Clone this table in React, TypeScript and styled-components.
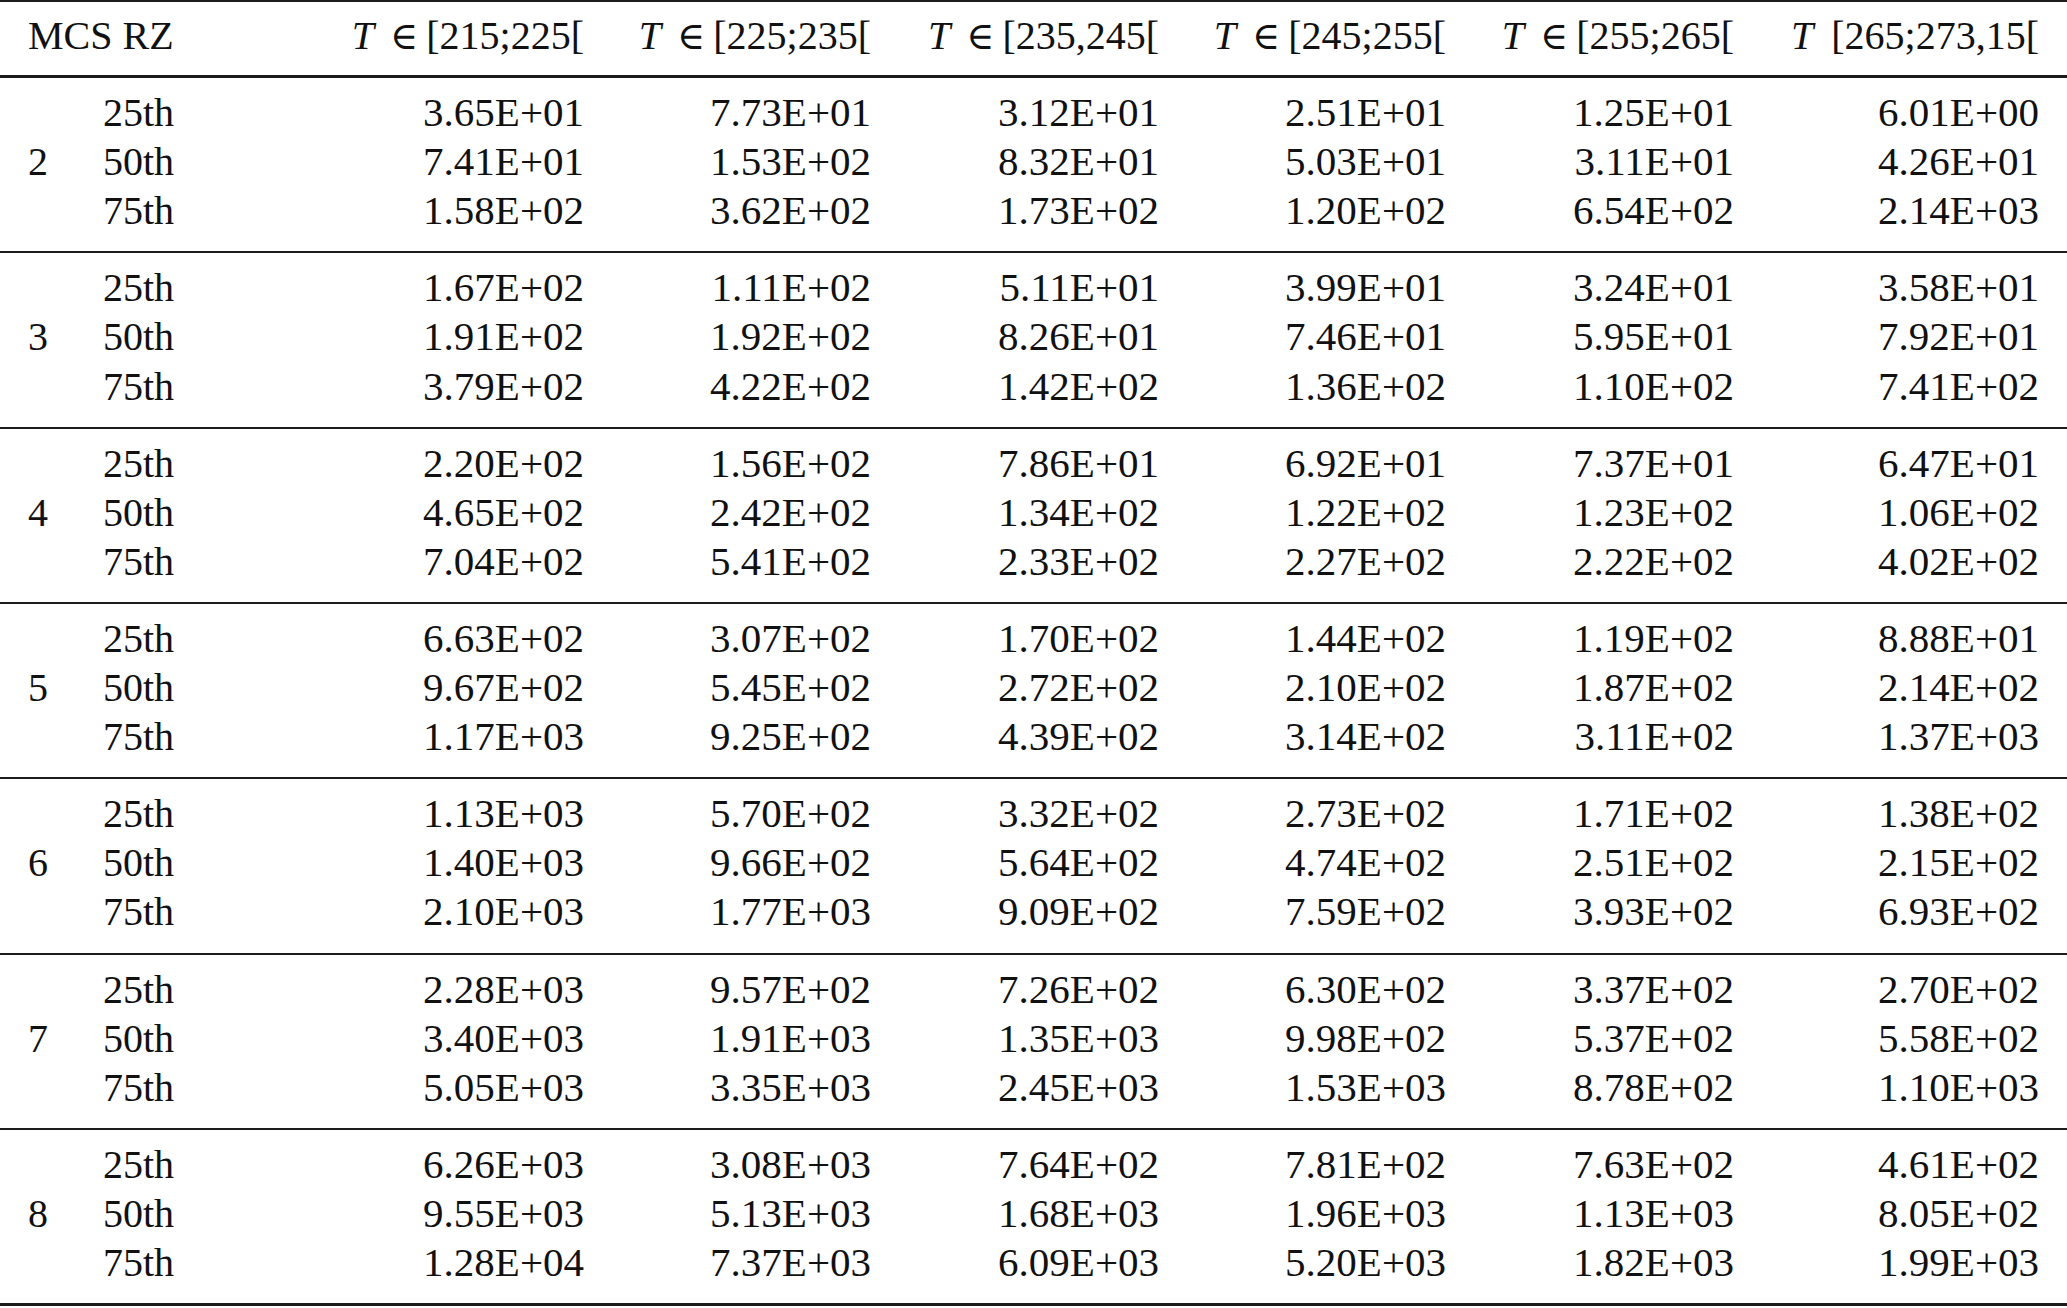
import React from "react";
import styled, { createGlobalStyle } from "styled-components";

const GlobalStyle = createGlobalStyle`
  html, body {
    margin: 0;
    padding: 0;
    background: #ffffff;
  }
  body {
    font-family: "Liberation Serif", "Times New Roman", serif;
    color: #111111;
  }
`;

const RULE = "#1c1c1c";

const Table = styled.table`
  width: 2067px;
  table-layout: fixed;
  border-collapse: separate;
  border-spacing: 0;
  font-family: "Liberation Serif", "Times New Roman", serif;
  font-size: 40px;
  line-height: 49.1px;
  color: #111111;
`;

const HeadCell = styled.th<{ $align: "left" | "right" }>`
  font-weight: normal;
  white-space: nowrap;
  text-align: ${(p) => p.$align};
  padding: 9px ${(p) => (p.$align === "right" ? "28px" : "0")} 15px
    ${(p) => (p.$align === "left" ? "28px" : "0")};
  border-top: 2px solid ${RULE};
  border-bottom: 3px solid ${RULE};
`;

const Var = styled.i`
  font-style: italic;
`;

const Relation = styled.span`
  font-family: "DejaVu Serif", "DejaVu Sans", serif;
  font-size: 38px;
  line-height: 0;
  margin: 0 8px 0 16px;
`;

const Gap = styled.span`
  margin-left: 18px;
`;

const Cell = styled.td<{
  $align: "left" | "right";
  $first: boolean;
  $last: boolean;
  $final: boolean;
}>`
  white-space: nowrap;
  text-align: ${(p) => p.$align};
  font-size: ${(p) => (p.$align === "right" ? "41px" : "40px")};
  padding-top: ${(p) => (p.$first ? "10px" : "0")};
  padding-bottom: ${(p) => (p.$last ? "16px" : "0")};
  padding-left: ${(p) => (p.$align === "left" ? "28px" : "0")};
  padding-right: ${(p) => (p.$align === "right" ? "28px" : "0")};
  border-bottom: ${(p) =>
    p.$last ? `${p.$final ? 3 : 2}px solid ${RULE}` : "none"};
`;

const headers: { range: string; member: boolean }[] = [
  { range: "[215;225[", member: true },
  { range: "[225;235[", member: true },
  { range: "[235,245[", member: true },
  { range: "[245;255[", member: true },
  { range: "[255;265[", member: true },
  { range: "[265;273,15[", member: false },
];

const colWidths = [75, 250, 287, 287, 288, 287, 288, 305];

const labels = ["25th", "50th", "75th"];

const groups: { rz: string; rows: string[][] }[] = [
  {
    rz: "2",
    rows: [
      ["3.65E+01", "7.73E+01", "3.12E+01", "2.51E+01", "1.25E+01", "6.01E+00"],
      ["7.41E+01", "1.53E+02", "8.32E+01", "5.03E+01", "3.11E+01", "4.26E+01"],
      ["1.58E+02", "3.62E+02", "1.73E+02", "1.20E+02", "6.54E+02", "2.14E+03"],
    ],
  },
  {
    rz: "3",
    rows: [
      ["1.67E+02", "1.11E+02", "5.11E+01", "3.99E+01", "3.24E+01", "3.58E+01"],
      ["1.91E+02", "1.92E+02", "8.26E+01", "7.46E+01", "5.95E+01", "7.92E+01"],
      ["3.79E+02", "4.22E+02", "1.42E+02", "1.36E+02", "1.10E+02", "7.41E+02"],
    ],
  },
  {
    rz: "4",
    rows: [
      ["2.20E+02", "1.56E+02", "7.86E+01", "6.92E+01", "7.37E+01", "6.47E+01"],
      ["4.65E+02", "2.42E+02", "1.34E+02", "1.22E+02", "1.23E+02", "1.06E+02"],
      ["7.04E+02", "5.41E+02", "2.33E+02", "2.27E+02", "2.22E+02", "4.02E+02"],
    ],
  },
  {
    rz: "5",
    rows: [
      ["6.63E+02", "3.07E+02", "1.70E+02", "1.44E+02", "1.19E+02", "8.88E+01"],
      ["9.67E+02", "5.45E+02", "2.72E+02", "2.10E+02", "1.87E+02", "2.14E+02"],
      ["1.17E+03", "9.25E+02", "4.39E+02", "3.14E+02", "3.11E+02", "1.37E+03"],
    ],
  },
  {
    rz: "6",
    rows: [
      ["1.13E+03", "5.70E+02", "3.32E+02", "2.73E+02", "1.71E+02", "1.38E+02"],
      ["1.40E+03", "9.66E+02", "5.64E+02", "4.74E+02", "2.51E+02", "2.15E+02"],
      ["2.10E+03", "1.77E+03", "9.09E+02", "7.59E+02", "3.93E+02", "6.93E+02"],
    ],
  },
  {
    rz: "7",
    rows: [
      ["2.28E+03", "9.57E+02", "7.26E+02", "6.30E+02", "3.37E+02", "2.70E+02"],
      ["3.40E+03", "1.91E+03", "1.35E+03", "9.98E+02", "5.37E+02", "5.58E+02"],
      ["5.05E+03", "3.35E+03", "2.45E+03", "1.53E+03", "8.78E+02", "1.10E+03"],
    ],
  },
  {
    rz: "8",
    rows: [
      ["6.26E+03", "3.08E+03", "7.64E+02", "7.81E+02", "7.63E+02", "4.61E+02"],
      ["9.55E+03", "5.13E+03", "1.68E+03", "1.96E+03", "1.13E+03", "8.05E+02"],
      ["1.28E+04", "7.37E+03", "6.09E+03", "5.20E+03", "1.82E+03", "1.99E+03"],
    ],
  },
];

export default function App() {
  return (
    <>
      <GlobalStyle />
      <Table>
        <colgroup>
          {colWidths.map((w, i) => (
            <col key={i} style={{ width: `${w}px` }} />
          ))}
        </colgroup>
        <thead>
          <tr>
            <HeadCell $align="left" colSpan={2}>
              MCS RZ
            </HeadCell>
            {headers.map((h) => (
              <HeadCell key={h.range} $align="right">
                <Var>T</Var>
                {h.member ? <Relation>∈</Relation> : <Gap />}
                {h.range}
              </HeadCell>
            ))}
          </tr>
        </thead>
        <tbody>
          {groups.map((g, gi) =>
            g.rows.map((row, ri) => {
              const first = ri === 0;
              const last = ri === g.rows.length - 1;
              const final = gi === groups.length - 1;
              const flags = { $first: first, $last: last, $final: final };
              return (
                <tr key={`${g.rz}-${ri}`}>
                  <Cell $align="left" {...flags}>
                    {ri === 1 ? g.rz : ""}
                  </Cell>
                  <Cell $align="left" {...flags}>
                    {labels[ri]}
                  </Cell>
                  {row.map((v, ci) => (
                    <Cell key={ci} $align="right" {...flags}>
                      {v}
                    </Cell>
                  ))}
                </tr>
              );
            })
          )}
        </tbody>
      </Table>
    </>
  );
}
